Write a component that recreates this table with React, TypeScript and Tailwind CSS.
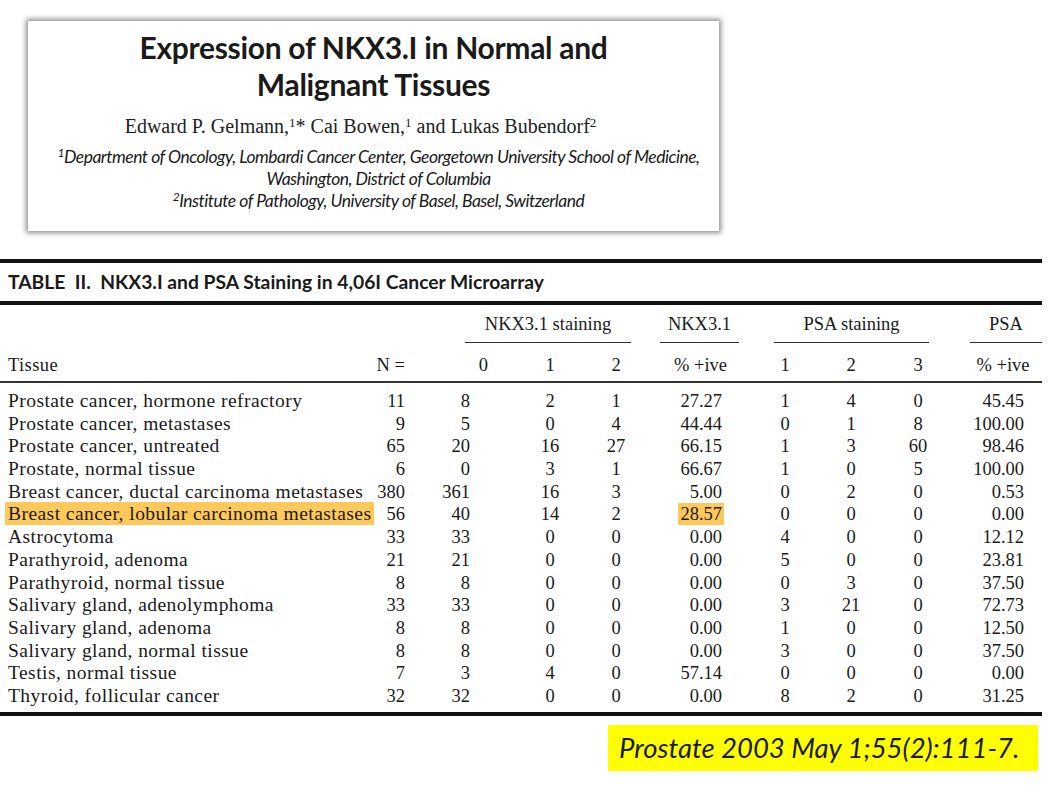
const rows: [string, string, string, string, string, string, string, string, string, string][] = [
  ["Prostate cancer, hormone refractory", "11", "8", "2", "1", "27.27", "1", "4", "0", "45.45"],
  ["Prostate cancer, metastases", "9", "5", "0", "4", "44.44", "0", "1", "8", "100.00"],
  ["Prostate cancer, untreated", "65", "20", "16", "27", "66.15", "1", "3", "60", "98.46"],
  ["Prostate, normal tissue", "6", "0", "3", "1", "66.67", "1", "0", "5", "100.00"],
  ["Breast cancer, ductal carcinoma metastases", "380", "361", "16", "3", "5.00", "0", "2", "0", "0.53"],
  ["Breast cancer, lobular carcinoma metastases", "56", "40", "14", "2", "28.57", "0", "0", "0", "0.00"],
  ["Astrocytoma", "33", "33", "0", "0", "0.00", "4", "0", "0", "12.12"],
  ["Parathyroid, adenoma", "21", "21", "0", "0", "0.00", "5", "0", "0", "23.81"],
  ["Parathyroid, normal tissue", "8", "8", "0", "0", "0.00", "0", "3", "0", "37.50"],
  ["Salivary gland, adenolymphoma", "33", "33", "0", "0", "0.00", "3", "21", "0", "72.73"],
  ["Salivary gland, adenoma", "8", "8", "0", "0", "0.00", "1", "0", "0", "12.50"],
  ["Salivary gland, normal tissue", "8", "8", "0", "0", "0.00", "3", "0", "0", "37.50"],
  ["Testis, normal tissue", "7", "3", "4", "0", "57.14", "0", "0", "0", "0.00"],
  ["Thyroid, follicular cancer", "32", "32", "0", "0", "0.00", "8", "2", "0", "31.25"],
]

const cols = "grid grid-cols-[360px_50px_107px_66px_66px_103px_66px_66px_68px_90px]"
const serif = "font-['Liberation_Serif',serif]"

export default function App() {
  return (
    <div className="w-[1050px] h-[788px] bg-white overflow-hidden text-[#1a1a1a]">
      {/* article header */}
      <div className="ml-[28px] mt-[21px] w-[691px] h-[210px] bg-white shadow-[0_0_5px_2px_rgba(0,0,0,0.45)] flex flex-col items-center">
        <h1 className="mt-[8px] text-center font-['Lato',sans-serif] font-bold text-[30px] leading-[37px] tracking-[-0.3px]">
          Expression of NKX3.I in Normal and
          <br />
          Malignant Tissues
        </h1>
        <p className={`mt-[11px] pr-[26px] ${serif} text-[20px] leading-[24px] text-[#222]`}>
          Edward P. Gelmann,<sup className="text-[13px]">1</sup>* Cai Bowen,<sup className="text-[13px]">1</sup> and Lukas
          Bubendorf<sup className="text-[13px]">2</sup>
        </p>
        <div className="mt-[8px] pl-[10px] text-center font-['Lato',sans-serif] italic text-[17.5px] leading-[22px] tracking-[-0.5px]">
          <div>
            <sup className="text-[12px]">1</sup>Department of Oncology, Lombardi Cancer Center, Georgetown University School of Medicine,
          </div>
          <div>Washington, District of Columbia</div>
          <div>
            <sup className="text-[12px]">2</sup>Institute of Pathology, University of Basel, Basel, Switzerland
          </div>
        </div>
      </div>

      {/* table */}
      <div className="mt-[28px] w-[1042px]">
        <div className="h-[4px] bg-[#111]" />
        <div className="h-[38px] flex items-center pl-2 font-['Lato',sans-serif] font-bold text-[19.3px] whitespace-pre">
          {"TABLE  II.  NKX3.I and PSA Staining in 4,06I Cancer Microarray"}
        </div>
        <div className="h-[4px] bg-[#111]" />

        <div className={`${cols} ${serif} text-[18.5px] leading-[18px] pt-[10px]`}>
          <div className="col-span-2" />
          <div className="col-span-3 ml-[55px] mr-[18px] text-center border-b border-[#333] pb-[9px]">NKX3.1 staining</div>
          <div className="ml-[11px] mr-[13px] text-center border-b border-[#333] pb-[9px]">NKX3.1</div>
          <div className="col-span-3 ml-[22px] mr-[23px] text-center border-b border-[#333] pb-[9px]">PSA staining</div>
          <div className="ml-[18px] text-center border-b border-[#333] pb-[9px]">PSA</div>
        </div>

        <div className={`${cols} ${serif} text-[18.5px] leading-[18px] pt-[13px] pb-[7px] border-b-2 border-[#333]`}>
          <div className="pl-2 tracking-[0.4px]">Tissue</div>
          <div className="text-right pr-[5px]">N =</div>
          <div className="text-right pr-[29px]">0</div>
          <div className="text-center">1</div>
          <div className="text-center">2</div>
          <div className="text-center">% +ive</div>
          <div className="text-center">1</div>
          <div className="text-center">2</div>
          <div className="text-center">3</div>
          <div className="text-center pl-[12px]">% +ive</div>
        </div>

        <div className={`${serif} text-[18.5px] leading-[22.7px] pt-[7px] pb-[4px]`}>
          {rows.map((r) => {
            const hl = r[0].startsWith("Breast cancer, lobular")
            return (
              <div key={r[0]} className={`${cols} h-[22.7px] items-baseline`}>
                <div className="pl-[5px] text-[19.5px] tracking-[0.45px] whitespace-nowrap">
                  <span className={hl ? "bg-[#fcc95a] px-[3px] py-[1px]" : "px-[3px]"}>{r[0]}</span>
                </div>
                <div className="text-right pr-[5px]">{r[1]}</div>
                <div className="text-right pr-[47px]">{r[2]}</div>
                <div className="text-center">{r[3]}</div>
                <div className="text-center">{r[4]}</div>
                <div className="text-right pr-[28px]">
                  <span className={hl ? "bg-[#fcc95a] px-[2px] py-[1px]" : "px-[2px]"}>{r[5]}</span>
                </div>
                <div className="text-center">{r[6]}</div>
                <div className="text-center">{r[7]}</div>
                <div className="text-center">{r[8]}</div>
                <div className="text-right pr-[18px]">{r[9]}</div>
              </div>
            )
          })}
        </div>
        <div className="h-[4px] bg-[#111]" />
      </div>

      {/* citation */}
      <div className="mt-[9px] ml-[608px] w-[430px] h-[46px] bg-[#ffff00] flex items-center pl-[11px] font-['Lato',sans-serif] italic text-[27.5px]">
        Prostate 2003 May 1;55(2):111-7.
      </div>
    </div>
  )
}
